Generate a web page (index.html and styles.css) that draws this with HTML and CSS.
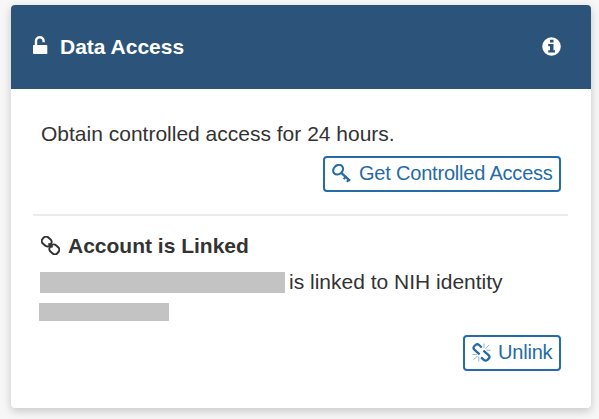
FILE: index.html
```
<!DOCTYPE html>
<html lang="en">
<head>
<meta charset="utf-8">
<title>Data Access</title>
<link rel="stylesheet" href="styles.css">
</head>
<body>
<main class="card">
  <header class="card-header">
    <svg class="lock" viewBox="0 0 15 18" aria-hidden="true"><path d="M3 10V5a3.8 3.8 0 0 1 7.6 0v1.2" fill="none" stroke="currentColor" stroke-width="2.4"/><rect y="9" width="14.3" height="9" rx=".7" fill="currentColor"/></svg>
    <h1>Data Access</h1>
    <svg class="info" viewBox="0 0 19 19" aria-hidden="true"><circle cx="9.5" cy="9.5" r="9.3" fill="currentColor"/><path class="info-mark" d="M8 2.7h3.5v2.9H8zM6.2 7.1h5.3v6.2h1.5v2.1H6.2v-2.1H8V9.2H6.2z"/></svg>
  </header>
  <div class="card-body">
    <section class="access">
      <p class="intro">Obtain controlled access for 24 hours.</p>
      <button class="btn btn-access" type="button">
        <svg class="icon" viewBox="0 0 19 19" fill="none" stroke="currentColor" aria-hidden="true"><ellipse cx="6.1" cy="5.7" rx="5.3" ry="4.4" transform="rotate(-42 6.1 5.7)" stroke-width="2.1"/><path d="M9 8.6l9 8.2" stroke-width="2.4"/><path d="M11.7 15.1l2.6-2.9M14.9 17.9l2-2.4" stroke-width="2"/></svg>
        <span>Get Controlled Access</span>
      </button>
    </section>
    <section class="account">
      <h2>
        <svg class="icon" viewBox="0 0 19 19" fill="none" stroke="currentColor" stroke-width="2" aria-hidden="true"><rect x=".9" y="1.4" width="9.6" height="8.2" rx="3.3" transform="rotate(42 5.7 5.5)"/><rect x="8.5" y="9.3" width="9.6" height="8.2" rx="3.3" transform="rotate(42 13.3 13.4)"/><path d="M7.5 7.4l4 4"/></svg>
        <span>Account is Linked</span>
      </h2>
      <p class="identity"><span class="redacted redacted-name"></span><span>is linked to NIH identity</span></p>
      <div class="redacted redacted-id"></div>
      <button class="btn btn-unlink" type="button">
        <svg class="icon" viewBox="0 0 19 19" fill="none" stroke="currentColor" aria-hidden="true"><path d="M7.6 11.3L2.6 6.8Q.5 5 2.2 3.2L3.5 2Q5.3.4 7.1 2L9.7 4.5M11.4 7.7l5.1 4.4q1.8 1.8.2 3.6l-1.3 1.2q-1.8 1.5-3.6-.1L9.1 14.3" stroke-width="2.3"/><path d="M12 4.8V.5M13.4 5.6l3.8-3.8M14.4 7.2h4.1M6.8 13.7v4.7M5.6 12.8l-3.8 3.8M4.6 11.5H.5" stroke-width="1" opacity=".5"/></svg>
        <span>Unlink</span>
      </button>
    </section>
  </div>
</main>
</body>
</html>
```
FILE: styles.css
```
* { box-sizing: border-box; }

body {
  margin: 0;
  height: 419px;
  padding: 5px 8px 11px 11px;
  overflow: hidden;
  background: #f7f7f7;
  color: #333;
  font: 21px/30px "Liberation Sans", Arial, sans-serif;
}

h1, h2, p { margin: 0; }

svg { display: block; flex: none; }

.card {
  display: flex;
  flex-direction: column;
  height: 403px;
  border-radius: 4px;
  background: #fff;
  box-shadow: 0 3px 10px rgba(0, 0, 0, .2);
}

.card-header {
  display: flex;
  align-items: center;
  height: 84px;
  padding: 0 30px 0 22px;
  border-radius: 4px 4px 0 0;
  background: #2c547b;
  color: #fff;
}

.card-header h1 {
  margin: 0 auto 0 12px;
  font-size: 21px;
}

.lock { width: 15px; height: 18px; margin-top: -4px; }
.info { width: 19px; height: 19px; margin-top: -1px; }
.info-mark { fill: #2c547b; }

.card-body { padding: 30px 23px 0 22px; }

.access, .account {
  display: flex;
  flex-direction: column;
  padding: 0 7px 0 8px;
}

.access {
  height: 97px;
  border-bottom: 2px solid #ebebeb;
}

.btn {
  display: flex;
  align-items: center;
  align-self: flex-end;
  height: 36px;
  padding: 0 7px 2px;
  border: 2px solid #246ba8;
  border-radius: 4px;
  background: #fff;
  color: #246ba8;
  font: 20px/30px "Liberation Sans", Arial, sans-serif;
  letter-spacing: -.2px;
  white-space: nowrap;
}

.btn .icon { margin-right: 8px; }
.icon { width: 19px; height: 19px; }

.btn-access { width: 238px; margin-top: 7px; }
.btn-unlink { width: 98px; margin-top: 14px; }
.btn-unlink .icon { margin-right: 7px; }

.account { padding-top: 15px; }

.account h2 {
  display: flex;
  align-items: center;
  gap: 8px;
  font-size: 21px;
}

.account h2 .icon { margin-top: -2px; }

.identity {
  display: flex;
  align-items: center;
  height: 41px;
  margin-left: -1px;
}

.redacted { background: #c3c3c3; }
.redacted-name { width: 245px; height: 21px; margin: 1px 4px 0 0; }
.redacted-id { width: 130px; height: 18px; margin: 1px 0 0 -2px; }
```
